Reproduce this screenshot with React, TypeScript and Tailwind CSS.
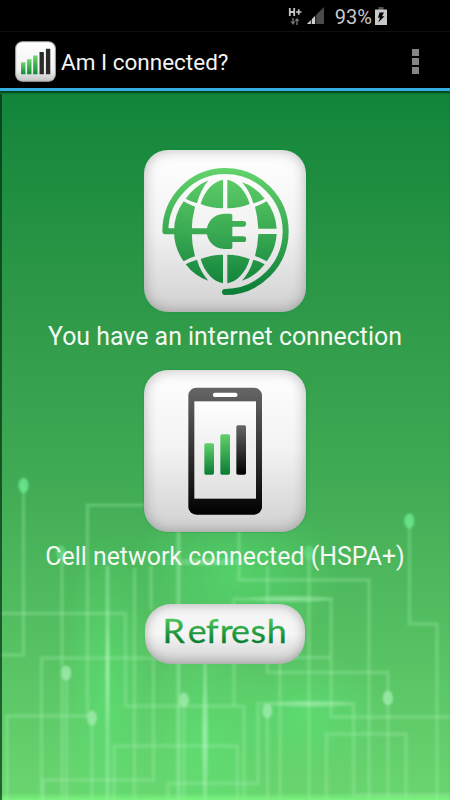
import React from 'react';

const TILE =
  'rounded-[24px] bg-linear-to-b from-white via-[#f2f2f2] to-[#d0d0d0] shadow-[inset_0_0_14px_rgba(0,0,0,0.28),0_0_2px_rgba(0,150,60,0.8)]';

const TRACES = [
  'M23.5 485V655H0',
  'M62 551V800',
  'M145 505H87.5V716',
  'M92 716H7V800',
  'M0 613.5H125.5V706H244V800',
  'M153.5 658V780H43V800',
  'M41.5 800V658H153.5',
  'M66.5 673V800',
  'M92 718V800',
  'M134.5 568V800',
  'M151 566V610',
  'M184 700V800',
  'M114 800V746H237.5V800',
  'M168 800V783.5H258V703.5H353.5V795H450',
  'M234 706V599H331V717H450',
  'M280 657.5H331',
  'M239 530V580H369V800',
  'M267.5 566V672.5H388V800',
  'M309 553V800',
  'M409.5 521V624H437V800',
  'M280 663V800',
  'M267.5 711V800',
  'M326.5 800V734H406V800',
];

const DOTS = [
  [23.5, 485.5], [61, 553], [66.2, 673], [92, 718], [184, 700],
  [267.3, 711], [387.8, 698], [309, 553], [409.3, 521],
];

const GLOWS = [
  [107, 700, 50, 170], [235, 575, 110, 75], [205, 745, 70, 120], [305, 715, 85, 60],
];

const Circuit: React.FC = () => (
  <svg className="absolute inset-0" width="450" height="800" viewBox="0 0 450 800" fill="none">
    <defs>
      <radialGradient id="glow">
        <stop offset="0" stopColor="#5ae676" stopOpacity="0.55" />
        <stop offset="1" stopColor="#5ae676" stopOpacity="0" />
      </radialGradient>
      <radialGradient id="flare">
        <stop offset="0" stopColor="#c5f9cb" stopOpacity="0.4" />
        <stop offset="1" stopColor="#c5f9cb" stopOpacity="0" />
      </radialGradient>
      <linearGradient id="floor" x1="0" y1="0" x2="0" y2="1">
        <stop offset="0" stopColor="#84ff84" stopOpacity="0" />
        <stop offset="1" stopColor="#84ff84" stopOpacity="0.7" />
      </linearGradient>
      <filter id="soft" x="0" y="0" width="450" height="800" filterUnits="userSpaceOnUse">
        <feGaussianBlur stdDeviation="0.9" />
      </filter>
    </defs>
    {GLOWS.map(([x, y, rx, ry]) => (
      <ellipse key={`${x}-${y}`} cx={x} cy={y} rx={rx} ry={ry} fill="url(#glow)" />
    ))}
    <g filter="url(#soft)">
      {TRACES.map(d => (
        <path key={d} d={d} stroke="#a5f0b0" strokeOpacity="0.3" strokeWidth="3.500" />
      ))}
      <path d="M107.5 566V800M178.5 530V800M205 663V800" stroke="#b5f7bd" strokeOpacity="0.36" strokeWidth="4" />
      {DOTS.map(([x, y]) => (
        <ellipse key={`${x}-${y}`} cx={x} cy={y} rx="5" ry="7.5" fill={y < 560 ? '#69e48d' : '#98e9a6'} fillOpacity={y === 553 ? 0.6 : 0.9} />
      ))}
    </g>
    <ellipse cx="107.5" cy="670" rx="3.500" ry="65" fill="url(#flare)" />
    <ellipse cx="205" cy="735" rx="5" ry="60" fill="url(#flare)" />
    <ellipse cx="290" cy="599" rx="48" ry="5" fill="url(#flare)" />
    <ellipse cx="310" cy="704" rx="48" ry="5" fill="url(#flare)" />
    <ellipse cx="205" cy="562" rx="50" ry="5" fill="url(#flare)" />
    <rect y="793" width="450" height="7" fill="url(#floor)" />
    <path d="M0 94V800" stroke="#00280f" strokeOpacity="0.65" strokeWidth="4" />
  </svg>
);

const StatusBar: React.FC = () => (
  <div className="flex h-[31px] items-center justify-end bg-black pr-[63px]">
    <svg width="14" height="20" viewBox="0 0 14 20" className="mr-[5px]">
      <path d="M1.8 2V10M6.2 2V10M1.8 6H6.2" stroke="#c4c4c4" strokeWidth="1.8" />
      <path d="M8 6H13.5M10.7 3.3V8.7" stroke="#c4c4c4" strokeWidth="1.7" />
      <path d="M5 12V17M9 19V14" stroke="#777" strokeWidth="1.3" />
      <path d="M2.5 15.5H7.5L5 19ZM6.5 15H11.5L9 12Z" fill="#777" />
    </svg>
    <svg width="17" height="17" viewBox="0 0 17 17" className="mr-[11px]">
      <path d="M0 17L17 0V17Z" fill="#4b4b4b" />
      <path d="M0 17L8.5 8.5V17Z" fill="#d0d0d0" />
      <path d="M4.3 11V17M8.7 7V17" stroke="#000" strokeWidth="0.9" />
    </svg>
    <span className="mt-[3px] mr-[3px] text-[20px] leading-none text-[#c8c8c8]">93%</span>
    <svg width="12" height="18" viewBox="0 0 12 18">
      <rect x="3.5" width="5" height="3" fill="#505050" />
      <rect y="2.5" width="12" height="15.5" fill="#c8c8c8" />
      <path d="M4.5 5.5H9L7 9.3H9.5L3.3 15.5L5 10.8H3Z" fill="#000" />
    </svg>
  </div>
);

const AppIcon: React.FC = () => (
  <svg width="41" height="41" viewBox="45 33 122 122">
    <defs>
      <linearGradient id="appTile" x1="0" y1="0" x2="0" y2="1">
        <stop offset="0" stopColor="#fff" />
        <stop offset="0.7" stopColor="#f2f2f2" />
        <stop offset="1" stopColor="#c4c4c4" />
      </linearGradient>
      <linearGradient id="appBar" x1="0" y1="0" x2="0" y2="1">
        <stop offset="0" stopColor="#6ed66f" />
        <stop offset="1" stopColor="#0d8a36" />
      </linearGradient>
    </defs>
    <rect x="47" y="35" width="118" height="118" rx="20" fill="url(#appTile)" stroke="#aaa" strokeWidth="3" />
    <rect x="63" y="96" width="13" height="36" rx="1" fill="url(#appBar)" />
    <rect x="81" y="87" width="13" height="45" rx="1" fill="url(#appBar)" />
    <rect x="99" y="76" width="13" height="56" rx="1" fill="url(#appBar)" />
    <rect x="118" y="66" width="13" height="66" rx="1" fill="#2b2b2b" />
    <rect x="137" y="56" width="13" height="76" rx="1" fill="#2b2b2b" />
  </svg>
);

const ActionBar: React.FC = () => (
  <div className="flex h-[60px] items-center border-t border-b-[3px] border-t-[#101010] border-b-[#33ade0] bg-black pt-[2px] pr-[31px] pl-[15px]">
    <AppIcon />
    <h1 className="mt-[3px] ml-[5px] flex-1 text-[22.5px] leading-none whitespace-nowrap text-[#f3f3f3]">Am I connected?</h1>
    <div className="flex flex-col gap-[2px]">
      <span className="size-[7px] bg-[#858585]" />
      <span className="size-[7px] bg-[#858585]" />
      <span className="size-[7px] bg-[#858585]" />
    </div>
  </div>
);

const GlobeIcon: React.FC = () => (
  <svg width="162" height="162" viewBox="27 28 486 486" fill="none">
    <defs>
      <linearGradient id="globe" gradientUnits="userSpaceOnUse" x1="0" y1="82" x2="0" y2="462">
        <stop offset="0" stopColor="#63d36b" />
        <stop offset="0.5" stopColor="#3aaa53" />
        <stop offset="1" stopColor="#0b7d37" />
      </linearGradient>
    </defs>
    <path
      d="M215 272H91A180 181 0 0 1 270 91A181.500 181.500 0 0 1 452 272A182 182 0 0 1 270 454"
      stroke="url(#globe)"
      strokeWidth="18"
      strokeLinecap="round"
      strokeLinejoin="round"
    />
    <g fill="url(#globe)">
      <path d="M264 117C235 122 208 150 197 190Q230 203 264 203Z" />
      <path d="M277 117C306 122 333 150 344 190Q311 203 277 203Z" />
      <path d="M264 428C235 423 208 395 197 355Q230 342 264 342Z" />
      <path d="M277 428C306 423 333 395 344 355Q311 342 277 342Z" />
      <path d="M220 119Q180 136 152 174Q168 183 186 188Q196 150 220 119Z" />
      <path d="M321 125Q360 136 389 174Q373 183 355 188Q345 152 321 125Z" />
      <path d="M220 420Q180 408 152 371Q168 362 186 357Q196 393 220 420Z" />
      <path d="M321 420Q361 408 389 371Q373 362 355 357Q345 393 321 420Z" />
      <path d="M146 182Q162 192 180 198Q170 235 170 272Q170 310 180 347Q162 352 146 362Q117 322 117 272Q117 222 146 182Z" />
      <path d="M395 182Q422 218 425 264H370Q368 227 360 198Q379 192 395 182Z" />
      <path d="M395 362Q422 326 425 280H370Q368 317 360 346Q379 352 395 362Z" />
      <path d="M287 219Q292 219 292 224V241H325A8.500 8.500 0 0 1 325 258H292V287H325A8.500 8.500 0 0 1 325 304H292V320Q292 325 287 325H268C237 325 215 300 215 272C215 244 237 219 268 219Z" />
    </g>
  </svg>
);

const PhoneIcon: React.FC = () => (
  <svg width="162" height="162" viewBox="27 24 486 486">
    <defs>
      <linearGradient id="phoneBody" x1="0" y1="0" x2="0" y2="1">
        <stop offset="0" stopColor="#666" />
        <stop offset="1" stopColor="#000" />
      </linearGradient>
      <linearGradient id="screen" x1="0" y1="0" x2="0" y2="1">
        <stop offset="0" stopColor="#fff" />
        <stop offset="1" stopColor="#e0e0e0" />
      </linearGradient>
      <linearGradient id="bar" x1="0" y1="0" x2="0" y2="1">
        <stop offset="0" stopColor="#62d069" />
        <stop offset="1" stopColor="#0a7c36" />
      </linearGradient>
    </defs>
    <rect x="160" y="77" width="221" height="381" rx="24" fill="url(#phoneBody)" />
    <rect x="234" y="92" width="73" height="13" rx="5" fill="#fff" />
    <rect x="178" y="118" width="185" height="292" fill="url(#screen)" />
    <rect x="208" y="244" width="29" height="94" rx="5" fill="url(#bar)" />
    <rect x="256" y="217" width="29" height="121" rx="5" fill="url(#bar)" />
    <rect x="304" y="190" width="29" height="148" rx="5" fill="url(#phoneBody)" />
  </svg>
);

const RefreshButton: React.FC = () => (
  <button
    type="button"
    className="mt-[31px] h-[60px] w-[160px] rounded-[26px] bg-linear-to-b from-[#f4f4f4] via-[#f6f6f6] to-[#cfcfcf] shadow-[inset_0_0_12px_rgba(0,0,0,0.3)]"
  >
    <svg width="160" height="60" viewBox="0 0 160 60">
      <defs>
        <linearGradient id="label" gradientUnits="userSpaceOnUse" x1="0" y1="15" x2="0" y2="40">
          <stop offset="0" stopColor="#4cc458" />
          <stop offset="1" stopColor="#047a2f" />
        </linearGradient>
      </defs>
      <text
        x="15.9 38.8 55.5 67.9 78.3 96 110.6"
        y="39"
        transform="scale(1.1 1)"
        fontSize="32.5"
        fill="url(#label)"
        stroke="url(#label)"
        strokeWidth="0.3"
        strokeLinejoin="round"
        className="font-['Lato']"
      >
        Refresh
      </text>
    </svg>
  </button>
);

const App: React.FC = () => (
  <div className="relative h-[800px] w-[450px] overflow-hidden bg-linear-to-b from-[#10843a] from-[11%] via-[#40ab54] via-[60%] to-[#6ad670] font-['Roboto',sans-serif]">
    <Circuit />
    <div className="relative flex h-full flex-col">
      <StatusBar />
      <ActionBar />
      <main className="flex flex-1 flex-col items-center pt-[59px] shadow-[inset_0_3px_2px_-1px_rgba(0,45,12,0.75)]">
        <div className={TILE}>
          <GlobeIcon />
        </div>
        <p className="mt-[9px] h-[32px] text-[24.9px] leading-[32px] whitespace-nowrap text-[#f3f8f3]">You have an internet connection</p>
        <div className={`mt-[17px] ${TILE}`}>
          <PhoneIcon />
        </div>
        <p className="mt-[9px] h-[32px] text-[24.9px] leading-[32px] whitespace-nowrap text-[#f3f8f3]">Cell network connected (HSPA+)</p>
        <RefreshButton />
      </main>
    </div>
  </div>
);

export default App;
